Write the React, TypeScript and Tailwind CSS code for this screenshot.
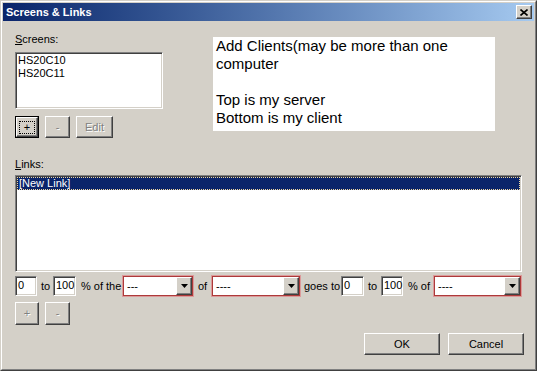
import React from "react";

const sunken =
  "border border-t-[#808080] border-l-[#808080] border-r-white border-b-white shadow-[inset_1px_1px_0_#404040,inset_-1px_-1px_0_#d4d0c8]";
const raised =
  "border border-t-white border-l-white border-r-[#404040] border-b-[#404040] shadow-[inset_-1px_-1px_0_#808080]";

const Btn: React.FC<{ label: string; w: string; h: string; disabled?: boolean; focus?: boolean }> = (props) => {
  const txt = props.disabled ? "text-[#808080] [text-shadow:1px_1px_0_#ffffff]" : "text-black";
  if (props.focus) {
    return (
      <div className={`${props.w} ${props.h} border border-black flex`}>
        <div className={`flex-1 ${raised} flex items-center justify-center`}>
          <span className={`border border-dotted border-black px-[4px] leading-[11px] ${txt}`}>{props.label}</span>
        </div>
      </div>
    );
  }
  return (
    <div className={`${props.w} ${props.h} ${raised} flex items-center justify-center ${txt}`}>{props.label}</div>
  );
};

const Combo: React.FC<{ w: string; value: string }> = (props) => (
  <div className={`${props.w} h-[22px] border border-[#dc9a9a] flex`}>
    <div className="flex-1 border border-[#ad3a3a] bg-white flex items-stretch">
      <span className="flex-1 pl-[3px] leading-[18px]">{props.value}</span>
      <div className={`w-[16px] bg-[#d4d0c8] ${raised} flex items-center justify-center`}>
        <svg width="7" height="4" viewBox="0 0 7 4">
          <path d="M0 0H7L3.5 4Z" fill="#000" />
        </svg>
      </div>
    </div>
  </div>
);

const Field: React.FC<{ w: string; value: string }> = (props) => (
  <div className={`${props.w} h-[20px] bg-white ${sunken} pl-[2px] leading-[17px]`}>{props.value}</div>
);

export default function App() {
  return (
    <div className="w-[537px] h-[371px] bg-[#d4d0c8] border border-t-[#d4d0c8] border-l-[#d4d0c8] border-r-[#404040] border-b-[#404040] flex font-['Liberation_Sans',Arial,sans-serif] text-[11px] text-black">
      <div className="flex-1 border border-t-white border-l-white border-r-[#808080] border-b-[#808080] p-[1px] flex flex-col">
        <div className="h-[18px] bg-linear-to-r from-[#0a246a] to-[#a6caf0] flex items-center justify-between pl-[3px] pr-[2px]">
          <span className="text-white font-bold text-[11px]">Screens &amp; Links</span>
          <div className={`w-[16px] h-[14px] bg-[#d4d0c8] ${raised} flex items-center justify-center`}>
            <svg width="8" height="7" viewBox="0 0 8 7">
              <path d="M0.5 0.5L7.5 6.5M7.5 0.5L0.5 6.5" stroke="#000" strokeWidth="1.6" />
            </svg>
          </div>
        </div>

        <div className="flex-1 flex flex-col pl-[12px] pr-[10px] pt-[12px]">
          <div className="flex">
            <div className="w-[148px] flex flex-col">
              <div className="leading-[13px] h-[13px]">
                <span className="underline">S</span>creens:
              </div>
              <div className={`mt-[6px] h-[57px] bg-white ${sunken} px-[2px] pt-[1px] leading-[13px]`}>
                <div>HS20C10</div>
                <div>HS20C11</div>
              </div>
              <div className="mt-[7px] flex gap-[6px]">
                <Btn label="+" w="w-[24px]" h="h-[22px]" focus />
                <Btn label="-" w="w-[25px]" h="h-[22px]" disabled />
                <Btn label="Edit" w="w-[37px]" h="h-[22px]" disabled />
              </div>
            </div>
            <div className="ml-[50px] mt-[4px] w-[282px] h-[94px] bg-white pl-[3px] text-[15px] leading-[18px]">
              <div>Add Clients(may be more than one</div>
              <div>computer</div>
              <div>&nbsp;</div>
              <div>Top is my server</div>
              <div>Bottom is my client</div>
            </div>
          </div>

          <div className="mt-[20px] leading-[13px] h-[13px]">
            <span className="underline">L</span>inks:
          </div>
          <div className={`mt-[4px] w-[507px] h-[97px] bg-white ${sunken} p-[1px]`}>
            <div className="h-[13px] bg-[#0a246a] text-white leading-[11px] border border-dotted border-[#f0d8a0] pl-[1px]">
              [New Link]
            </div>
          </div>

          <div className="mt-[3px] h-[22px] flex items-center">
            <Field w="w-[22px]" value="0" />
            <span className="ml-[4px] w-[9px]">to</span>
            <div className="ml-[3px]">
              <Field w="w-[23px]" value="100" />
            </div>
            <span className="ml-[5px] w-[38px] whitespace-nowrap">% of the</span>
            <div className="ml-[3px]">
              <Combo w="w-[72px]" value="---" />
            </div>
            <span className="ml-[4px] w-[9px]">of</span>
            <div className="ml-[4px]">
              <Combo w="w-[90px]" value="----" />
            </div>
            <span className="ml-[3px] w-[34px] whitespace-nowrap">goes to</span>
            <div className="ml-[3px]">
              <Field w="w-[23px]" value="0" />
            </div>
            <span className="ml-[4px] w-[9px]">to</span>
            <div className="ml-[4px]">
              <Field w="w-[22px]" value="100" />
            </div>
            <span className="ml-[5px] w-[22px] whitespace-nowrap">% of</span>
            <div className="ml-[3px]">
              <Combo w="w-[89px]" value="----" />
            </div>
          </div>

          <div className="mt-[5px] flex gap-[6px]">
            <Btn label="+" w="w-[24px]" h="h-[23px]" disabled />
            <Btn label="-" w="w-[25px]" h="h-[23px]" disabled />
          </div>

          <div className="mt-[8px] flex justify-end gap-[8px]">
            <Btn label="OK" w="w-[76px]" h="h-[22px]" />
            <Btn label="Cancel" w="w-[76px]" h="h-[22px]" />
          </div>
        </div>
      </div>
    </div>
  );
}
